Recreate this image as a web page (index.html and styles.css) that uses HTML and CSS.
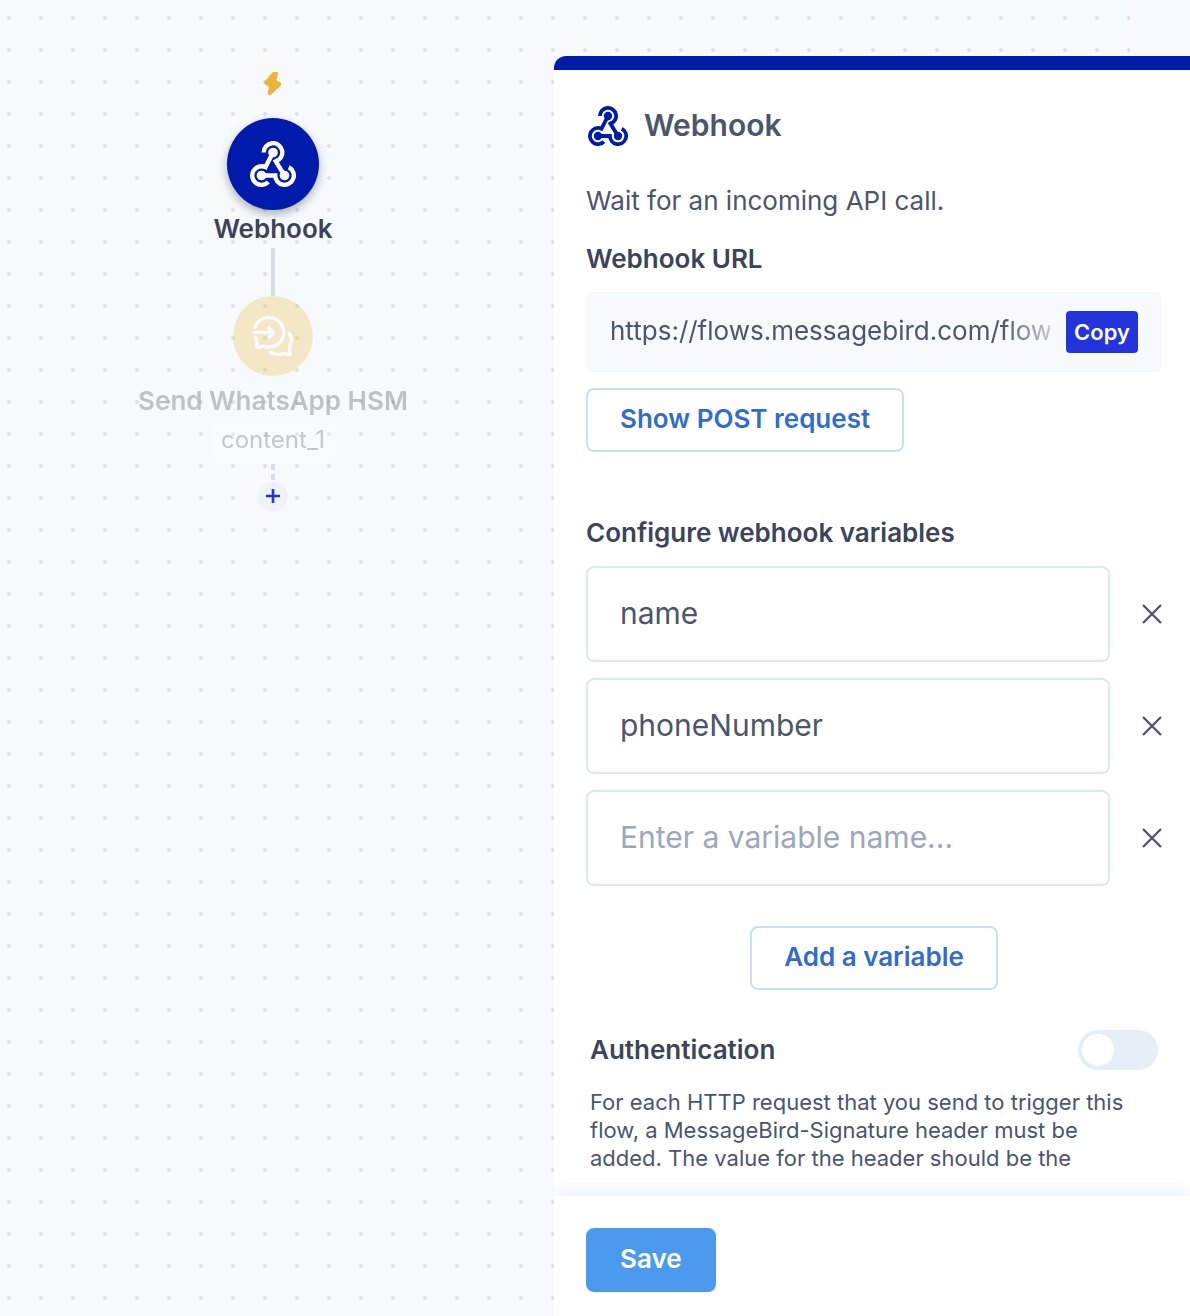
FILE: index.html
```html
<!DOCTYPE html>
<html lang="en">
<head>
    <meta charset="UTF-8">
    <meta name="viewport" content="width=device-width, initial-scale=1.0">
    <title>Flow Builder - Webhook</title>
    <link rel="stylesheet" href="styles.css">
</head>
<body>
    <!-- shared icons -->
    <svg class="sprite" aria-hidden="true">
        <symbol id="icon-webhook" viewBox="0 0 40 40">
            <g fill="none" stroke="currentColor" stroke-width="3.8">
                <path d="M11.9 10A8.1 8.1 0 1 1 22.5 17.7"/>
                <path d="M21.4 16L30 30"/>
                <path d="M20 10L13.5 22.7A8.1 8.1 0 1 0 15.9 35.6"/>
                <path d="M10 30H21.9A8.1 8.1 0 1 0 33.7 22.8"/>
            </g>
            <g fill="currentColor">
                <circle cx="20" cy="10" r="4.2"/>
                <circle cx="10" cy="30" r="4.2"/>
                <circle cx="30" cy="30" r="4.2"/>
            </g>
        </symbol>
        <symbol id="icon-close" viewBox="0 0 20 20">
            <path d="M1 1L19 19M19 1L1 19" fill="none" stroke="currentColor" stroke-width="2.3"/>
        </symbol>
    </svg>

    <div class="app">
        <main class="canvas">
            <svg class="bolt" viewBox="0 0 18 24"><path d="M9.5 1L13.2 1L11.3 8.5L16.2 11.6L16.2 12.8L6 22.3L4.6 21.8L6 14.5L1.3 11.2L1.3 10.2Z" fill="#ebb53d" stroke="#ebb53d" stroke-width="2" stroke-linejoin="round"/></svg>
            <div class="node">
                <div class="node-icon node-webhook"><svg><use href="#icon-webhook"/></svg></div>
                <div class="node-label">Webhook</div>
            </div>
            <div class="line"></div>
            <div class="node faded">
                <div class="node-icon node-whatsapp">
                    <svg viewBox="0 0 40 40" fill="none" stroke="#fff" stroke-width="3.5" stroke-linecap="round" stroke-linejoin="round">
                        <path d="M2 11.3A14.8 14.8 0 1 1 11.5 30.5C8.5 29.8 7 31 3.8 31.3C4.4 27.5 4.2 25 2.7 22"/>
                        <path d="M1.2 16.6H20.5M16 12.4L20.8 16.6L16 21"/>
                        <path d="M36 17.5C38.6 20.5 39 25 37.2 28.5C36 31.5 36.6 34 37 38.5C33.5 38.6 32 37.2 29.5 38C25 39 21 38.3 17.5 36.3"/>
                    </svg>
                </div>
                <div class="node-label">Send WhatsApp HSM</div>
                <div class="node-tag">content_1</div>
            </div>
            <div class="line dashed"></div>
            <button class="add-step" type="button" aria-label="Add step">
                <svg viewBox="0 0 14 14"><path d="M7 0V14M0 7H14" stroke="currentColor" stroke-width="2.6"/></svg>
            </button>
        </main>

        <form class="panel">
            <div class="panel-body">
                <header class="panel-header">
                    <svg><use href="#icon-webhook"/></svg>
                    <h1>Webhook</h1>
                </header>
                <p class="intro">Wait for an incoming API call.</p>

                <h2><label for="url">Webhook URL</label></h2>
                <div class="url-box">
                    <input type="text" id="url" value="https://flows.messagebird.com/flows/" readonly>
                    <button class="copy" type="button">Copy</button>
                </div>
                <button class="btn" type="button">Show POST request</button>

                <h2 class="variables-title">Configure webhook variables</h2>
                <div class="variables">
                    <div class="variable">
                        <input type="text" value="name" aria-label="Variable 1">
                        <button type="button" aria-label="Remove"><svg><use href="#icon-close"/></svg></button>
                    </div>
                    <div class="variable">
                        <input type="text" value="phoneNumber" aria-label="Variable 2">
                        <button type="button" aria-label="Remove"><svg><use href="#icon-close"/></svg></button>
                    </div>
                    <div class="variable">
                        <input type="text" placeholder="Enter a variable name..." aria-label="Variable 3">
                        <button type="button" aria-label="Remove"><svg><use href="#icon-close"/></svg></button>
                    </div>
                </div>
                <button class="btn btn-center" type="button">Add a variable</button>

                <section class="auth">
                    <div class="auth-row">
                        <h2><label for="auth">Authentication</label></h2>
                        <input class="toggle" type="checkbox" id="auth">
                    </div>
                    <p>For each HTTP request that you send to trigger this flow, a MessageBird-Signature header must be added. The value for the header should be the</p>
                </section>
            </div>
            <footer class="panel-footer">
                <button class="btn btn-save" type="submit">Save</button>
            </footer>
        </form>
    </div>
</body>
</html>
```

FILE: styles.css
```css
* { box-sizing: border-box; }
body { margin: 0; font-family: Inter, "Liberation Sans", sans-serif; color: #4b556b; }
h1, h2, p { margin: 0; }
button, input { font-family: inherit; }
button { cursor: pointer; }
.sprite { position: absolute; width: 0; height: 0; }

.app {
    display: grid;
    grid-template-columns: minmax(0, 1fr) minmax(0, 636px);
    min-height: 100vh;
    background-color: #f6fafd;
    background-image:
        linear-gradient(#f7f9fe, #f7f9fe),
        radial-gradient(circle, #dde1e5 2px, transparent 2px);
    background-size: 60px 100%, 32px 32px;
    background-position: right top, -7px 2px;
    background-repeat: no-repeat, repeat;
}

/* flow canvas */
.canvas { display: flex; flex-direction: column; align-items: center; padding: 72px 8px 0 0; }
.bolt { width: 18px; height: 24px; margin-bottom: 22px; }
.node { display: flex; flex-direction: column; align-items: center; }
.node-icon { display: flex; align-items: center; justify-content: center; border-radius: 50%; }
.node-webhook { width: 92px; height: 92px; background: #001aac; color: #fff; box-shadow: 0 4px 10px rgba(0, 0, 0, 0.3); }
.node-webhook svg { width: 46px; height: 46px; }
.node-whatsapp { width: 80px; height: 80px; margin-bottom: 6px; background: #eebd49; }
.node-whatsapp svg { width: 40px; height: 40px; }
.node-label { font-size: 26px; line-height: 38px; font-weight: 600; color: #3b4458; }
.node-tag { height: 44px; padding: 0 10px; border-radius: 8px; background: #fff; font-size: 24px; line-height: 40px; }
.faded { opacity: 0.3; }
.line { width: 4px; height: 48px; background: #d7dcea; }
.dashed { height: 16px; background: repeating-linear-gradient(#d7dcea 0 6px, transparent 6px 10px); }
.add-step { display: flex; align-items: center; justify-content: center; width: 30px; height: 30px; margin-top: 2px; padding: 0 0 2px; border: none; border-radius: 50%; background: #eff2fb; color: #2434dc; }
.add-step svg { width: 14px; height: 14px; }

/* side panel */
.panel { display: flex; flex-direction: column; margin-top: 56px; border-top: 14px solid #001aac; border-top-left-radius: 12px; background: #fff; }
.panel-body { flex: 1; padding: 36px 28px 24px 32px; }
.panel-header { display: flex; align-items: flex-start; gap: 16px; padding-left: 2px; }
.panel-header svg { width: 40px; height: 40px; color: #001aac; }
h1 { font-size: 30px; line-height: 38px; font-weight: 600; }
h2 { font-size: 26px; line-height: 34px; font-weight: 600; color: #3b4458; }
.intro { margin: 38px 0 24px; font-size: 26px; line-height: 34px; }

.url-box { display: flex; align-items: center; gap: 16px; height: 80px; margin: 16px 0; padding: 0 24px; border-radius: 6px; background: #f6fafd; }
.url-box input {
    flex: 1;
    min-width: 0;
    padding: 0 0 4px;
    border: none;
    outline: none;
    background: none;
    font-size: 26px;
    color: inherit;
    -webkit-mask-image: linear-gradient(to left, rgba(0, 0, 0, 0.3), #000 48px);
    mask-image: linear-gradient(to left, rgba(0, 0, 0, 0.3), #000 48px);
}
.copy { width: 72px; height: 42px; padding: 0; border: none; border-radius: 4px; background: #2434dc; color: #fff; font-size: 22px; font-weight: 600; }

.btn { display: block; height: 64px; padding: 0 32px 4px; border: 2px solid #cbdff4; border-radius: 8px; background: #fff; color: #326ccb; font-size: 26px; font-weight: 600; }
.btn-center { margin: 40px auto; }
.btn-save { border-color: #4c9aed; background: #4c9aed; color: #fff; }

.variables-title { margin: 64px 0 16px; }
.variables { display: flex; flex-direction: column; gap: 16px; }
.variable { display: flex; align-items: center; gap: 32px; }
.variable input { flex: 1; min-width: 0; height: 96px; padding: 0 32px 2px; border: 2px solid #dce8f4; border-radius: 8px; font-size: 30px; color: inherit; }
.variable input::placeholder { color: #9ba7bd; opacity: 1; }
.variable button { width: 20px; height: 20px; padding: 0; border: none; background: none; color: #4b556b; }
.variable svg { display: block; width: 20px; height: 20px; }

.auth { padding: 0 4px; }
.auth-row { display: flex; align-items: center; justify-content: space-between; height: 40px; margin-bottom: 18px; }
.auth p { padding-right: 16px; font-size: 22px; line-height: 28px; }
.toggle { appearance: none; width: 80px; height: 40px; margin: 0; padding: 4px; border-radius: 20px; background: #e6eff8; cursor: pointer; }
.toggle::before { content: ""; display: block; width: 32px; height: 32px; border-radius: 50%; background: #fff; }
.toggle:checked { background: #4c9aed; }
.toggle:checked::before { margin-left: auto; }

.panel-footer { padding: 32px 32px 24px; background: #fff; box-shadow: 0 -4px 16px rgba(50, 108, 203, 0.1); clip-path: inset(-24px 0 0 0); }
```
